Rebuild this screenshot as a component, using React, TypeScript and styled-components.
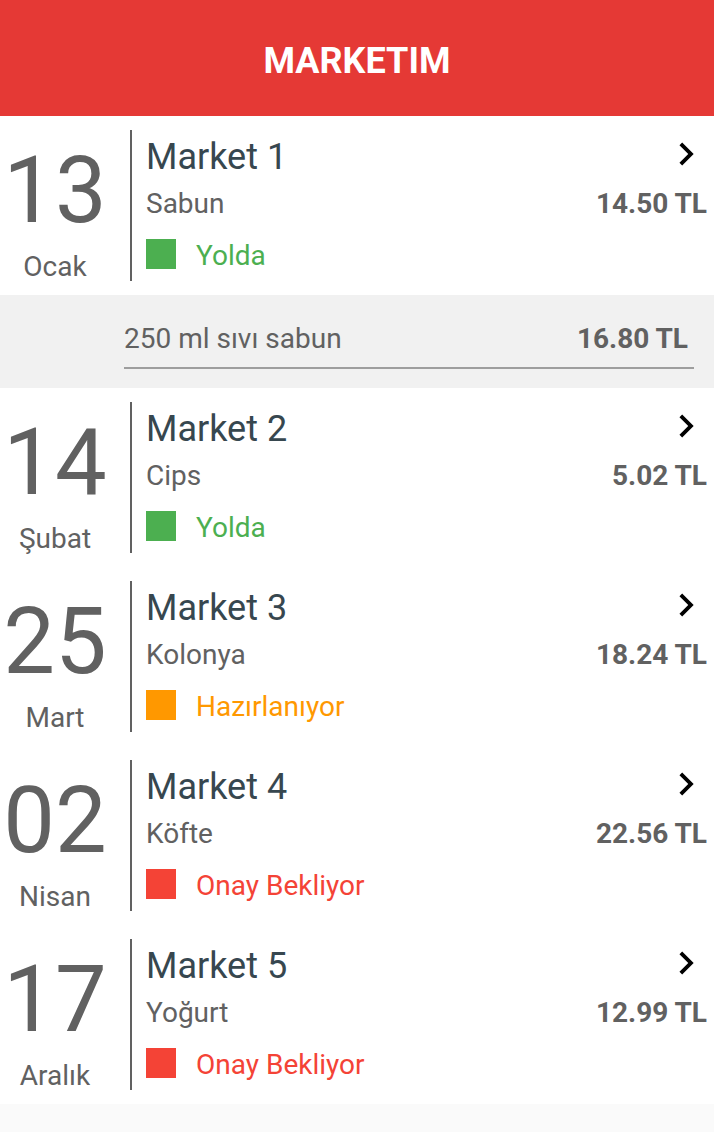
import React from 'react'
import styled, { createGlobalStyle } from 'styled-components'

const GlobalStyle = createGlobalStyle`
  html, body {
    margin: 0;
    padding: 0;
    background: #fafafa;
    font-family: Roboto, 'Noto Sans', sans-serif;
  }
`

type Status = 'yolda' | 'hazir' | 'onay'

const statusColor: Record<Status, string> = {
  yolda: '#4caf50',
  hazir: '#ff9800',
  onay: '#f44336',
}

const statusLabel: Record<Status, string> = {
  yolda: 'Yolda',
  hazir: 'Hazırlanıyor',
  onay: 'Onay Bekliyor',
}

interface Order {
  day: string
  month: string
  market: string
  item: string
  price: string
  status: Status
  details?: { name: string; price: string }[]
}

const orders: Order[] = [
  {
    day: '13',
    month: 'Ocak',
    market: 'Market 1',
    item: 'Sabun',
    price: '14.50 TL',
    status: 'yolda',
    details: [{ name: '250 ml sıvı sabun', price: '16.80 TL' }],
  },
  { day: '14', month: 'Şubat', market: 'Market 2', item: 'Cips', price: '5.02 TL', status: 'yolda' },
  { day: '25', month: 'Mart', market: 'Market 3', item: 'Kolonya', price: '18.24 TL', status: 'hazir' },
  { day: '02', month: 'Nisan', market: 'Market 4', item: 'Köfte', price: '22.56 TL', status: 'onay' },
  { day: '17', month: 'Aralık', market: 'Market 5', item: 'Yoğurt', price: '12.99 TL', status: 'onay' },
]

const Page = styled.div`
  min-height: 100vh;
  background: #fafafa;
`

const Header = styled.header`
  height: 116px;
  box-sizing: border-box;
  padding-top: 7px;
  background: #e53935;
  color: #fff;
  text-align: center;
  font-size: 36px;
  font-weight: 700;
  line-height: 109px;
`

const Card = styled.div`
  background: #fff;
  padding: 14px 0;
`

const CardRow = styled.div`
  display: flex;
  height: 151px;
`

const DateCol = styled.div`
  width: 110px;
  padding-top: 15px;
  display: flex;
  flex-direction: column;
  align-items: center;
  color: #616161;
`

const Day = styled.div`
  font-size: 92px;
  line-height: 92px;
  font-weight: 400;
`

const Month = styled.div`
  margin-top: 16px;
  font-size: 28px;
  line-height: 28px;
`

const Content = styled.div`
  flex: 1;
  margin-left: 20px;
  border-left: 2px solid #616161;
  padding: 0 7px 0 14px;
  display: flex;
  flex-direction: column;
`

const TitleRow = styled.div`
  height: 54px;
  display: flex;
  justify-content: space-between;
  align-items: flex-start;
`

const Title = styled.div`
  font-size: 36px;
  line-height: 54px;
  color: #37474f;
`

const Chevron = styled.svg`
  width: 46px;
  height: 46px;
  margin-top: 1px;
  margin-right: -2px;
`

const ItemRow = styled.div`
  margin-top: 3px;
  display: flex;
  justify-content: space-between;
  font-size: 28px;
  line-height: 34px;
  color: #616161;
`

const Price = styled.span`
  font-weight: 700;
`

const StatusRow = styled.div<{ $color: string }>`
  margin-top: 18px;
  display: flex;
  align-items: flex-start;
  color: ${(p) => p.$color};
`

const StatusBox = styled.span<{ $color: string }>`
  width: 30px;
  height: 30px;
  background: ${(p) => p.$color};
  margin-right: 20px;
  flex: none;
`

const StatusText = styled.span`
  font-size: 28px;
  line-height: 30px;
  margin-top: 2px;
`

const Details = styled.div`
  background: #f1f1f1;
  padding: 27px 20px 19px 124px;
`

const DetailLine = styled.div`
  display: flex;
  justify-content: space-between;
  padding: 0 6px 11px 0;
  border-bottom: 2px solid #9e9e9e;
  font-size: 28px;
  line-height: 34px;
  color: #616161;
`

const ChevronIcon = () => (
  <Chevron viewBox="0 0 24 24">
    <path d="M10 6L8.59 7.41 13.17 12l-4.58 4.59L10 18l6-6z" fill="#000" />
  </Chevron>
)

const OrderCard = ({ order }: { order: Order }) => (
  <>
    <Card>
      <CardRow>
        <DateCol>
          <Day>{order.day}</Day>
          <Month>{order.month}</Month>
        </DateCol>
        <Content>
          <TitleRow>
            <Title>{order.market}</Title>
            <ChevronIcon />
          </TitleRow>
          <ItemRow>
            <span>{order.item}</span>
            <Price>{order.price}</Price>
          </ItemRow>
          <StatusRow $color={statusColor[order.status]}>
            <StatusBox $color={statusColor[order.status]} />
            <StatusText>{statusLabel[order.status]}</StatusText>
          </StatusRow>
        </Content>
      </CardRow>
    </Card>
    {order.details &&
      order.details.map((d) => (
        <Details key={d.name}>
          <DetailLine>
            <span>{d.name}</span>
            <Price>{d.price}</Price>
          </DetailLine>
        </Details>
      ))}
  </>
)

const App = () => {
  return (
    <Page>
      <GlobalStyle />
      <Header>MARKETIM</Header>
      {orders.map((o) => (
        <OrderCard key={o.market} order={o} />
      ))}
    </Page>
  )
}

export default App
